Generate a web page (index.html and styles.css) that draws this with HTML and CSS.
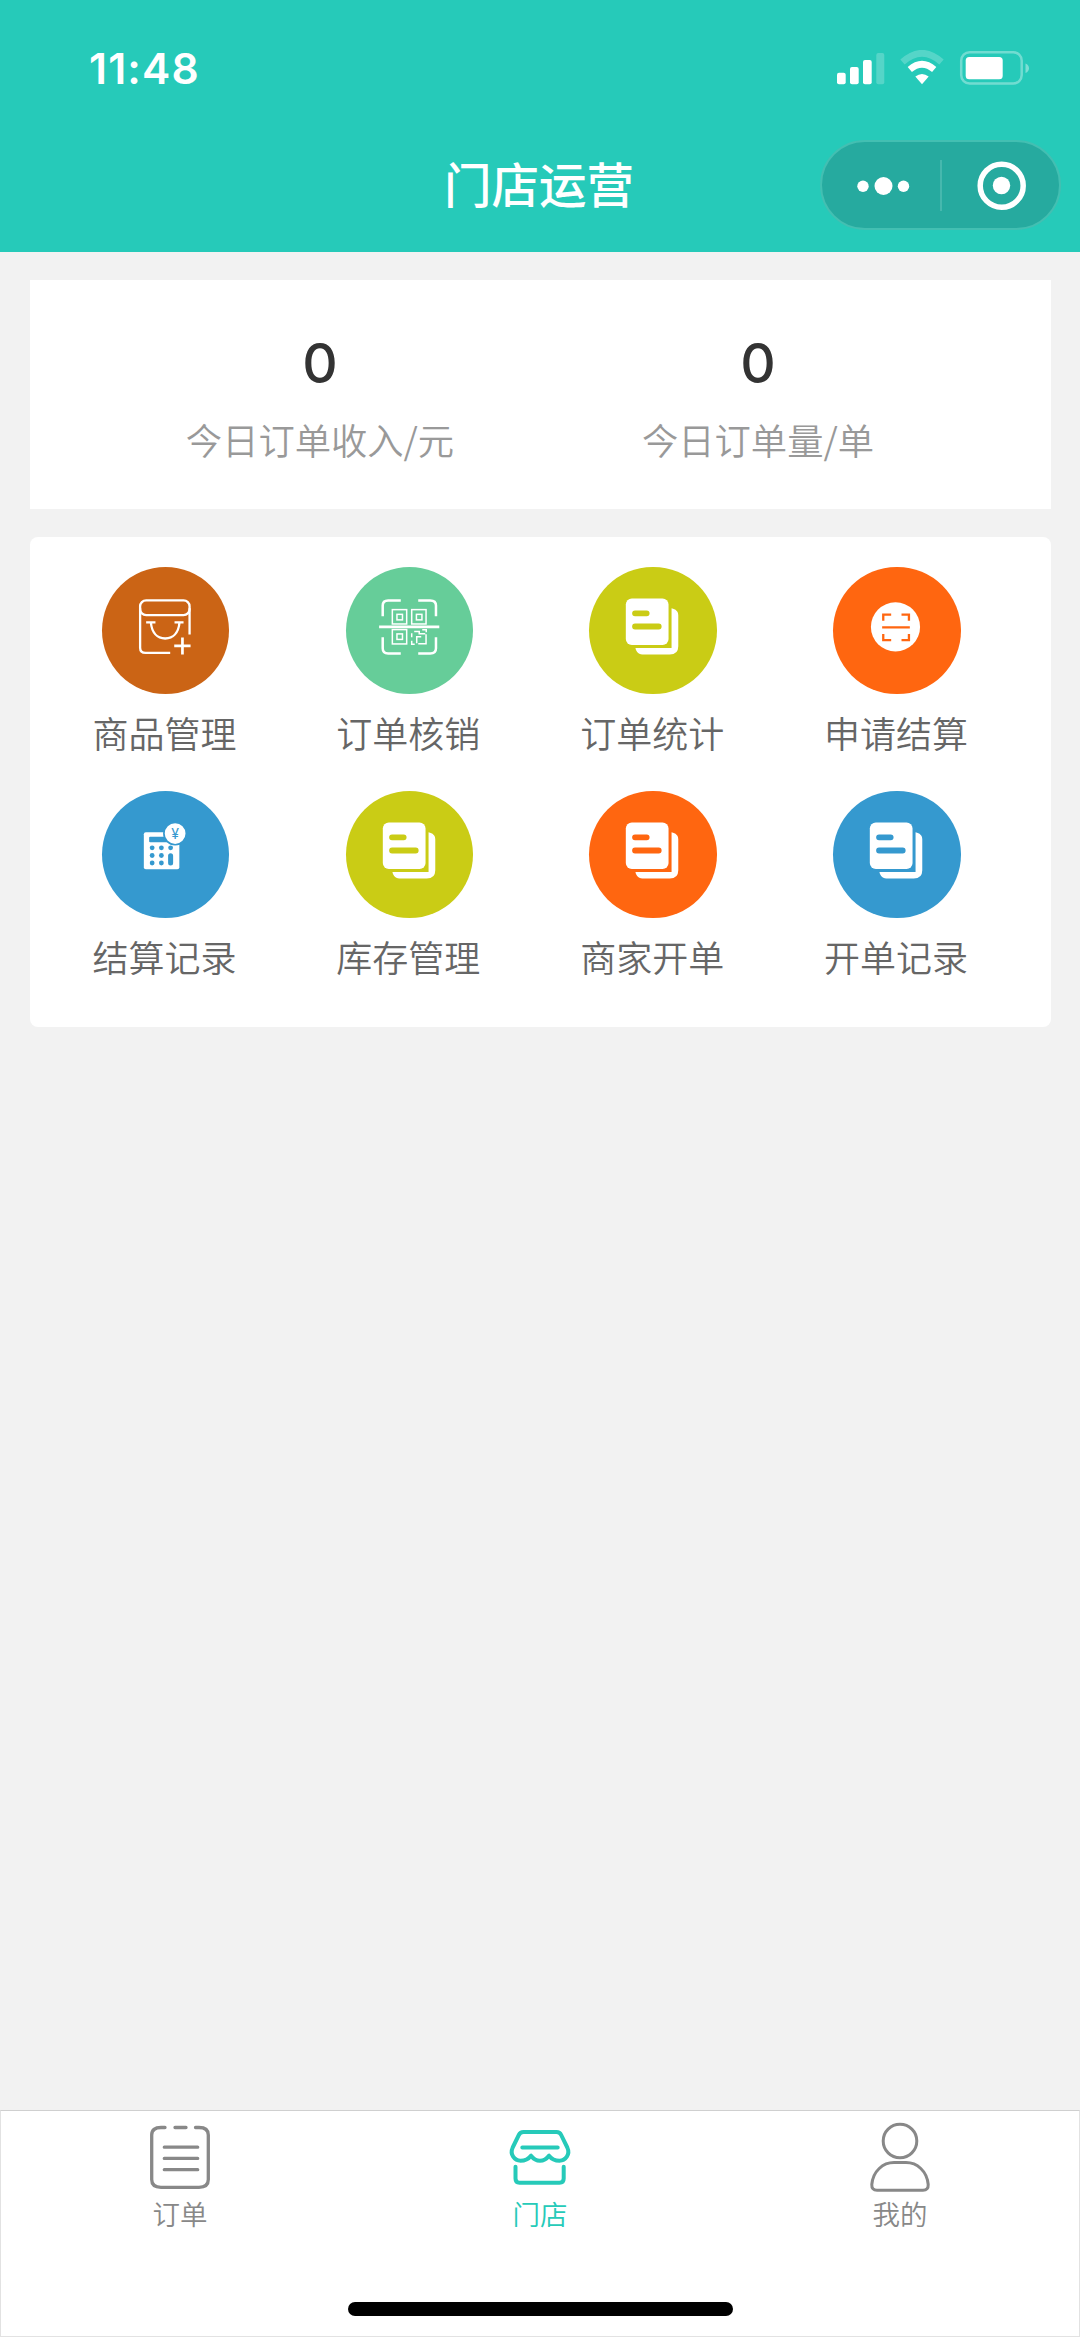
FILE: index.html
```html
<!DOCTYPE html>
<html lang="zh-CN">
<head>
<meta charset="utf-8">
<title>门店运营</title>
<link rel="stylesheet" href="styles.css">
</head>
<body>
<svg class="defs" aria-hidden="true">
  <symbol id="doc" viewBox="0 0 127 127">
    <path fill="#fff" d="M82.3 41C86.500 42 89 44 89 48V79Q89 87.300 80.500 87.300H55C50 87.300 47 85 46.300 80.700H82.300Z"/>
    <rect x="36.700" y="31.300" width="42.600" height="46.400" rx="6" fill="#fff"/>
    <path d="M45.900 46.200H57.500M45.900 59.300H69.500" stroke="currentColor" stroke-width="5.800" stroke-linecap="round"/>
  </symbol>
</svg>
<header class="header">
  <div class="status">
    <span class="time">11:48</span>
    <svg class="signals" width="194" height="36" viewBox="836 50 194 36" fill="#fff">
      <rect x="837" y="72.700" width="8.700" height="11.500" rx="2"/>
      <rect x="850" y="67" width="8.700" height="17.200" rx="2"/>
      <rect x="863" y="60" width="8.700" height="24.200" rx="2"/>
      <rect x="876.300" y="53" width="8" height="31.200" rx="2" opacity=".22"/>
      <path d="M902.500 62Q922 44.500 941.500 62" fill="none" stroke="#fff" stroke-width="6.500" opacity=".22"/>
      <path d="M909.800 69.500Q922 59 934.200 69.500" fill="none" stroke="#fff" stroke-width="6.500"/>
      <path d="M915.300 76.500Q922 71.500 928.700 76.500L922 84.300Z"/>
      <rect x="961.200" y="52.200" width="60.500" height="31.300" rx="8.500" fill="none" stroke="#fff" stroke-width="2.500" opacity=".35"/>
      <rect x="965.700" y="57" width="37" height="22.300" rx="3.500"/>
      <path d="M1025.500 63.500Q1029 65 1029 68.200T1025.500 73Z" opacity=".4"/>
    </svg>
  </div>
  <div class="navbar">
    <h1 class="title">门店运营</h1>
    <div class="capsule">
      <svg class="capsule-btn" width="118" height="86" viewBox="822 142 118 86" fill="#fff">
        <circle cx="863" cy="186.300" r="5.700"/><circle cx="883.500" cy="186" r="9"/><circle cx="903.500" cy="186.300" r="5.700"/>
      </svg>
      <span class="divider"></span>
      <svg class="capsule-btn" width="117" height="86" viewBox="942 142 117 86" fill="#fff">
        <circle cx="1001.700" cy="185.700" r="21.500" fill="none" stroke="#fff" stroke-width="5.500"/><circle cx="1001.500" cy="185.500" r="8.700"/>
      </svg>
    </div>
  </div>
</header>
<main class="content">
  <section class="stats">
    <div class="stat"><strong class="value">0</strong><span class="caption">今日订单收入/元</span></div>
    <div class="stat"><strong class="value">0</strong><span class="caption">今日订单量/单</span></div>
  </section>
  <nav class="menu">
    <a class="item">
      <svg class="disc brown" viewBox="0 0 127 127" fill="none" stroke="#fff" stroke-width="2.300">
        <rect x="38" y="33.200" width="49.300" height="14.800" rx="6"/>
        <path d="M38 41V80.500Q38 85.700 43.500 85.700H68M87.300 41V67.300"/>
        <path d="M44 55.300H53.300M72.300 55.300H81.300M48.700 55.300C49.700 65.500 55 71.300 63 71.300S76.300 65.500 77.300 55.300"/>
        <path d="M72 78.700H88.300M80.200 70.300V87.300" stroke-width="2.700"/>
      </svg>
      <span class="label">商品管理</span>
    </a>
    <a class="item">
      <svg class="disc green" viewBox="0 0 127 127" fill="none" stroke="#fff" stroke-width="2.500">
        <path d="M36.600 49V38.500Q36.600 33.300 42 33.300H54.600M72 33.300H84Q89.700 33.300 89.700 38.500V49M89.700 70V81Q89.700 86.200 84 86.200H72M54.600 86.200H42Q36.600 86.200 36.600 81V70"/>
        <path d="M33 59.700H93" stroke-width="2.800"/>
        <g stroke-width="1.500">
          <rect x="46.200" y="42.500" width="14.300" height="14.300"/><rect x="65.500" y="42.500" width="14.300" height="14.300"/><rect x="46.200" y="62.400" width="14.300" height="14.300"/>
          <rect x="50.800" y="47.200" width="5.500" height="5.500"/><rect x="70.200" y="47.200" width="5.500" height="5.500"/><rect x="50.800" y="66.700" width="5.500" height="5.500"/>
          <path d="M72 76.500H79.800V67M70.500 76V69.500H75M65.500 70V66M65.500 73.500V77H68.500M68 64.200H73V66.500H79M76 62.500H80V65"/>
        </g>
      </svg>
      <span class="label">订单核销</span>
    </a>
    <a class="item">
      <svg class="disc lime"><use href="#doc"/></svg>
      <span class="label">订单统计</span>
    </a>
    <a class="item">
      <svg class="disc orange" viewBox="0 0 127 127">
        <circle cx="62.300" cy="59.700" r="24.500" fill="#fff"/>
        <path d="M50.100 53.700V47.400H58M68.300 47.400H75.700V53.700M75.700 66.700V72.900H68.300M58 72.900H50.100V66.700M49 60.200H76.600" fill="none" stroke="currentColor" stroke-width="2.300"/>
      </svg>
      <span class="label">申请结算</span>
    </a>
    <a class="item">
      <svg class="disc blue" viewBox="0 0 127 127">
        <rect x="41.700" y="41" width="35.400" height="37" rx="2" fill="#fff"/>
        <g fill="currentColor">
          <rect x="47" y="45.500" width="20" height="5.500" rx="1"/>
          <circle cx="50" cy="56.700" r="2.400"/><circle cx="59.200" cy="56.700" r="2.400"/><circle cx="68.400" cy="56.700" r="2.400"/>
          <circle cx="50" cy="64.300" r="2.400"/><circle cx="59.200" cy="64.300" r="2.400"/>
          <circle cx="50" cy="71.800" r="2.400"/><circle cx="59.200" cy="71.800" r="2.400"/>
          <rect x="65.900" y="62" width="5" height="12.300" rx="2.500"/>
        </g>
        <circle cx="72.900" cy="42.400" r="11.200" fill="#fff" stroke="currentColor" stroke-width="1.700"/>
        <text class="yen" x="72.900" y="47.500" text-anchor="middle">¥</text>
      </svg>
      <span class="label">结算记录</span>
    </a>
    <a class="item">
      <svg class="disc lime"><use href="#doc"/></svg>
      <span class="label">库存管理</span>
    </a>
    <a class="item">
      <svg class="disc orange"><use href="#doc"/></svg>
      <span class="label">商家开单</span>
    </a>
    <a class="item">
      <svg class="disc blue"><use href="#doc"/></svg>
      <span class="label">开单记录</span>
    </a>
  </nav>
</main>
<footer class="tabbar">
  <div class="tabs">
    <a class="tab">
      <svg class="tab-icon" viewBox="0 0 72 74" stroke-width="3.300">
        <path d="M21 7.500H17Q7.700 7.500 7.700 15V59.500Q7.700 67.300 17 67.300H55Q64.300 67.300 64.300 59.500V15Q64.300 7.500 55 7.500H51.500M31 7.500H42"/>
        <path d="M20.300 27.200H53.700M20.300 38.400H53.700M20.300 49.700H53.700"/>
      </svg>
      <span class="tab-label">订单</span>
    </a>
    <a class="tab active">
      <svg class="tab-icon" viewBox="0 0 72 74" stroke-width="4">
        <path d="M19.500 12H52.500Q55.800 12 57.200 15L63.300 27.500C66.500 34.500 61.500 40.700 55.500 40.700C50.500 40.700 47.500 39 45 35.700C42.500 39 40 40.700 36 40.700S29.500 39 27 35.700C24.500 39 21.500 40.700 16.500 40.700C10.500 40.700 5.500 34.500 8.700 27.500L14.800 15Q16.200 12 19.500 12Z"/>
        <path d="M18.300 27.600H53.700M11.500 46.700V58.500Q11.500 62.700 15.500 62.700H55.500Q59.700 62.700 59.700 58.500V46.700"/>
      </svg>
      <span class="tab-label">门店</span>
    </a>
    <a class="tab">
      <svg class="tab-icon" viewBox="0 0 72 74" stroke-width="3">
        <circle cx="36" cy="21" r="16.800"/>
        <path d="M13 70.200H59Q64.500 70.200 64.200 64.500C63 51 53 42.600 42 42.600H30C19 42.600 9 51 7.800 64.500Q7.500 70.200 13 70.200Z"/>
      </svg>
      <span class="tab-label">我的</span>
    </a>
  </div>
  <div class="home-indicator"></div>
</footer>
</body>
</html>
```
FILE: styles.css
```css
* { box-sizing: border-box; }

body {
  margin: 0;
  width: 1080px;
  height: 2337px;
  display: flex;
  flex-direction: column;
  overflow: hidden;
  background: #f2f2f2;
  font-family: "Noto Sans CJK SC", sans-serif;
}

.defs { position: absolute; width: 0; height: 0; }

.header {
  height: 252px;
  padding: 44px 0 0;
  background: #26cab9;
  color: #fff;
}

.status {
  height: 50px;
  padding: 0 50px 0 89px;
  display: flex;
  align-items: center;
  justify-content: space-between;
}

.time {
  font: 600 42.5px/50px Inter, sans-serif;
  letter-spacing: 1.2px;
}

.signals { margin-top: -2px; }

.navbar {
  margin-top: 46px;
  height: 90px;
  padding-right: 19px;
  display: grid;
  grid-template-columns: 444px 192px 1fr;
  align-items: center;
}

.title {
  grid-column: 2;
  margin: -4px 0 0;
  font-size: 47.5px;
  font-weight: 500;
  line-height: 86px;
  white-space: nowrap;
}

.capsule {
  justify-self: end;
  width: 241px;
  height: 90px;
  display: flex;
  align-items: center;
  border: 2px solid #43bfb2;
  border-radius: 45px;
  background: #26aa9f;
}

.capsule-btn { display: block; flex: none; }

.divider {
  width: 2px;
  height: 51px;
  background: #46b8ae;
}

.content {
  flex: 1;
  padding: 28px 29px 0 30px;
  display: flex;
  flex-direction: column;
  gap: 28px;
}

.stats {
  height: 229px;
  padding: 50px 74px 0 71px;
  display: grid;
  grid-template-columns: 1fr 1fr;
  align-items: start;
  background: #fff;
}

.stat {
  display: flex;
  flex-direction: column;
  align-items: center;
}

.value {
  font: 500 55px/66px Inter, sans-serif;
  color: #333;
}

.caption {
  margin-top: 16px;
  font-size: 36.3px;
  font-weight: 350;
  line-height: 54px;
  color: #999;
}

.menu {
  height: 490px;
  padding: 29.500px 32px 0 13.500px;
  display: grid;
  grid-template-columns: repeat(4, 1fr);
  grid-auto-rows: 224.300px;
  align-content: start;
  border-radius: 8px;
  background: #fff;
}

.item {
  display: flex;
  flex-direction: column;
  align-items: center;
}

.disc {
  width: 127.400px;
  height: 127.400px;
  border-radius: 50%;
}

.brown { background: #cb6415; color: #cb6415; }
.green { background: #66cd99; color: #66cd99; }
.lime { background: #cacc15; color: #cacc15; }
.orange { background: #ff6610; color: #ff6610; }
.blue { background: #3599cf; color: #3599cf; }

.yen {
  font: 400 14px Inter, sans-serif;
  fill: currentColor;
}

.label {
  margin: 11px 2px 0 0;
  font-size: 36px;
  font-weight: 350;
  line-height: 54px;
  color: #666;
}

.tabbar {
  height: 227px;
  padding-top: 9px;
  display: flex;
  flex-direction: column;
  align-items: center;
  border: 1px solid #e2e2e2;
  border-top-color: #cfcfcf;
  background: #fff;
}

.tabs {
  width: 1080px;
  height: 182px;
  display: grid;
  grid-template-columns: repeat(3, 1fr);
}

.tab {
  display: flex;
  flex-direction: column;
  align-items: center;
  color: #888;
}

.tab.active { color: #26cab9; }

.tab-icon {
  width: 72px;
  height: 74px;
  fill: none;
  stroke: currentColor;
  stroke-linecap: round;
  stroke-linejoin: round;
}

.tab-label {
  font-size: 27.5px;
  font-weight: 350;
  line-height: 39px;
}

.home-indicator {
  flex: none;
  width: 385px;
  height: 14px;
  border-radius: 7px;
  background: #000;
}
```
